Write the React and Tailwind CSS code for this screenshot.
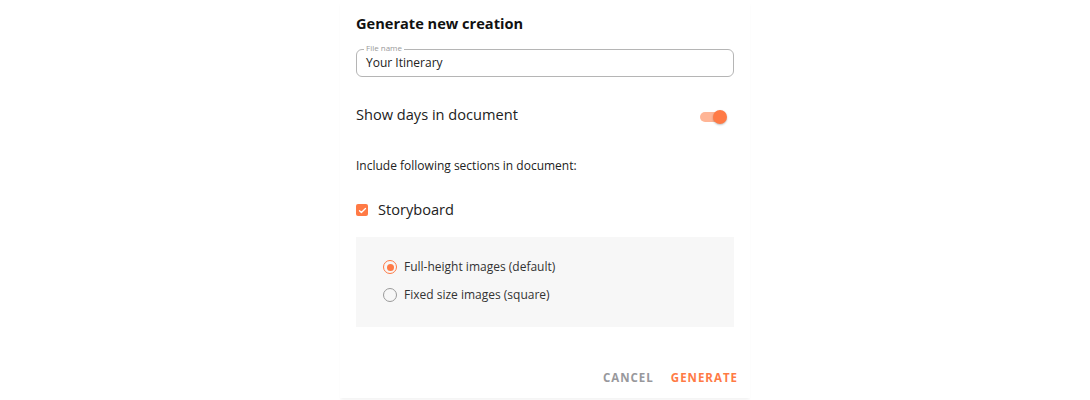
export default function App() {
  const font = { fontFamily: '"Open Sans", "DejaVu Sans", sans-serif' };
  return (
    <div className="w-[1090px] h-[400px] bg-white overflow-hidden flex justify-center" style={font}>
      <div className="w-[410px] h-[398px] bg-white shadow-[0_3px_3px_-1px_rgba(0,0,0,0.05)] px-[16px] pt-[13px] flex flex-col">
        <div className="text-[14.6px] font-bold text-[#111] leading-[20px]">Generate new creation</div>
        <div className="relative mt-[16px] h-[28px] w-[378px] rounded-[6px] border border-[#b5b5b5] flex items-center px-[9px]">
          <span className="absolute left-[7px] -top-[7px] bg-white px-[2px] text-[8px] leading-[10px] text-[#9a9a9a]">File name</span>
          <span className="text-[12px] text-[#222]">Your Itinerary</span>
        </div>
        <div className="mt-[26px] w-[378px] flex items-center justify-between h-[24px]">
          <span className="text-[14.6px] text-[#222]">Show days in document</span>
          <div className="relative w-[28px] h-[14px] mr-[6px] mt-[4px]">
            <div className="absolute left-0 top-[2px] w-[26px] h-[10px] rounded-full bg-[#ffb596]"></div>
            <div className="absolute left-[13px] top-0 w-[14px] h-[14px] rounded-full bg-[#ff7a45] shadow-[0_1px_2px_rgba(0,0,0,0.25)]"></div>
          </div>
        </div>
        <div className="mt-[31px] text-[12px] text-[#222] leading-[16px]">Include following sections in document:</div>
        <div className="mt-[25px] flex items-center h-[22px]">
          <div className="w-[12px] h-[12px] rounded-[2px] bg-[#ff7a45] flex items-center justify-center">
            <svg width="9" height="9" viewBox="0 0 24 24" fill="none" stroke="white" strokeWidth="3.5" strokeLinecap="round" strokeLinejoin="round"><path d="M4 12.5l5 5L20 6.5" /></svg>
          </div>
          <span className="ml-[10px] text-[14.6px] text-[#222]">Storyboard</span>
        </div>
        <div className="mt-[16px] w-[378px] h-[90px] bg-[#f7f7f7] pl-[27px] pt-[23px] flex flex-col gap-[14px]">
          <div className="flex items-center h-[14px]">
            <div className="w-[14px] h-[14px] rounded-full border-[1.5px] border-[#ff7a45] flex items-center justify-center">
              <div className="w-[7px] h-[7px] rounded-full bg-[#ff7a45]"></div>
            </div>
            <span className="ml-[7px] text-[12px] text-[#333]">Full-height images (default)</span>
          </div>
          <div className="flex items-center h-[14px]">
            <div className="w-[14px] h-[14px] rounded-full border-[1.5px] border-[#9a9a9a]"></div>
            <span className="ml-[7px] text-[12px] text-[#333]">Fixed size images (square)</span>
          </div>
        </div>
        <div className="mt-[42px] w-[382px] flex justify-end items-center gap-[17px] h-[18px]">
          <span className="text-[11.5px] font-bold tracking-[1px] text-[#98989c]">CANCEL</span>
          <span className="text-[11.5px] font-bold tracking-[1px] text-[#ff7a45]">GENERATE</span>
        </div>
      </div>
    </div>
  );
}
